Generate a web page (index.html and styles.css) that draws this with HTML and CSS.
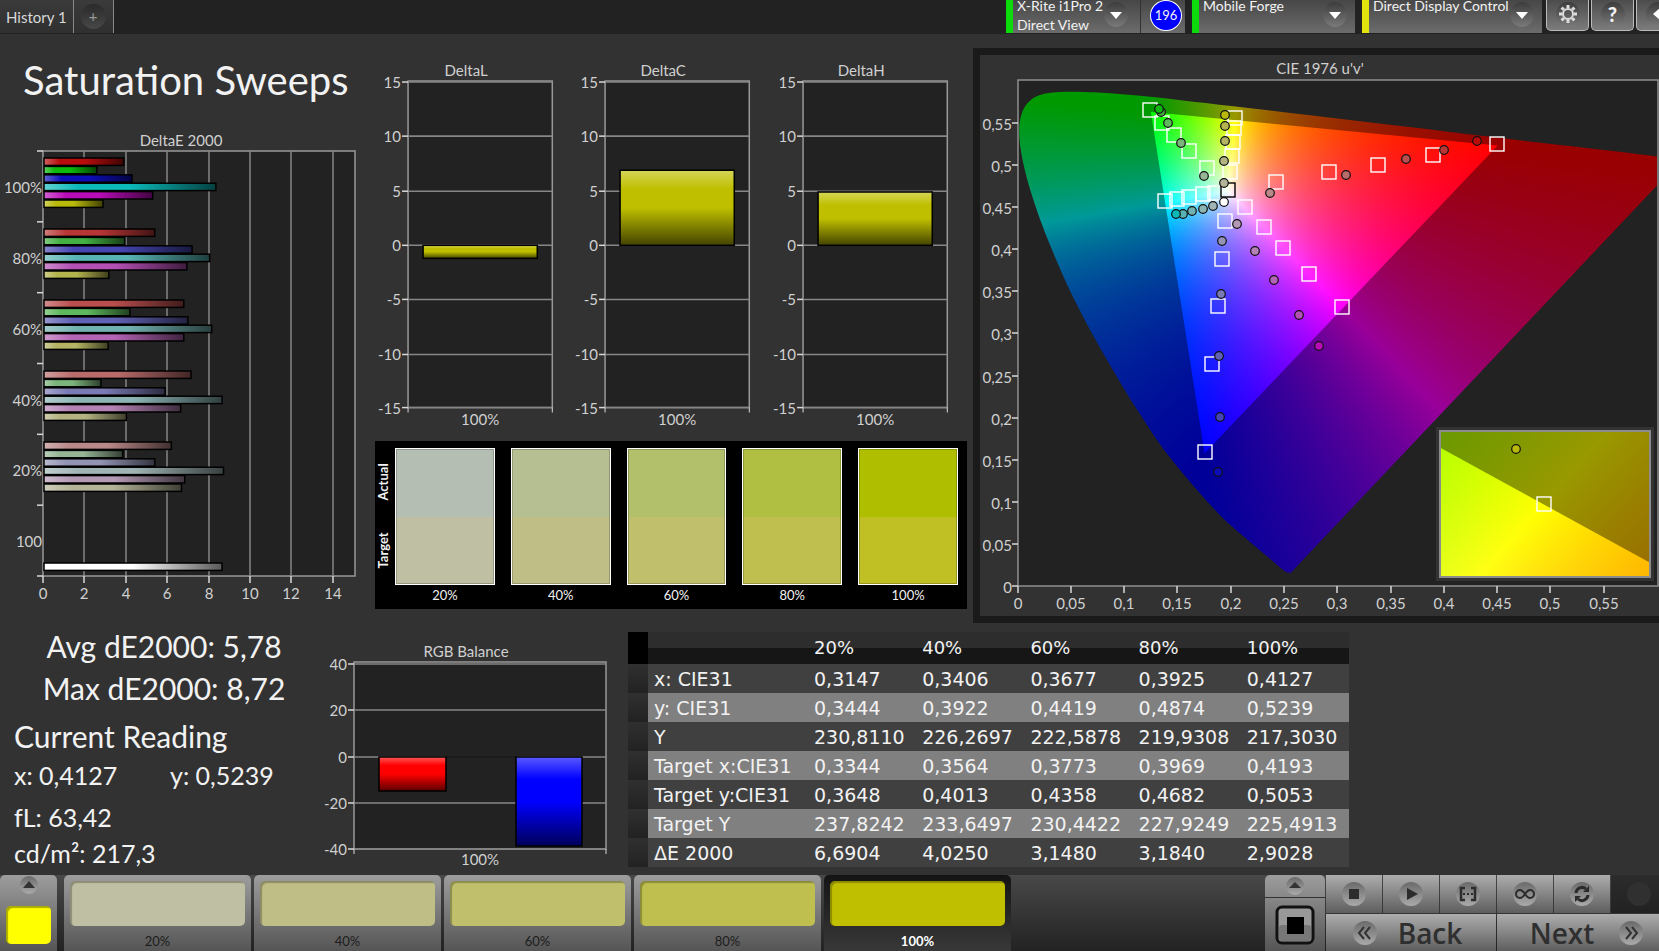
FILE: index.html
```html
<!DOCTYPE html>
<html lang="en">
<head>
<meta charset="utf-8">
<title>Saturation Sweeps</title>
<link rel="stylesheet" href="styles.css">
</head>
<body>
<header class="topbar">
  <nav class="tabs">
    <button class="tab" type="button">History 1</button>
    <button class="tab tab-add" type="button" aria-label="Add history"><span class="tab-plus">+</span></button>
  </nav>
  <div class="devices">
    <div class="device device-meter">
      <button class="device-pick" type="button"><span class="device-name">X-Rite i1Pro 2<br>Direct View</span><span class="knob"><svg viewBox="0 0 24 24"><path d="M6 10h12l-6 7z" fill="#fff"/></svg></span></button>
      <span class="device-count"><span class="count-badge">196</span></span>
    </div>
    <div class="device device-source">
      <button class="device-pick" type="button"><span class="device-name">Mobile Forge</span><span class="knob"><svg viewBox="0 0 24 24"><path d="M6 10h12l-6 7z" fill="#fff"/></svg></span></button>
    </div>
    <div class="device device-display">
      <button class="device-pick" type="button"><span class="device-name">Direct Display Control</span><span class="knob"><svg viewBox="0 0 24 24"><path d="M6 10h12l-6 7z" fill="#fff"/></svg></span></button>
    </div>
    <div class="tools">
      <button class="tool" type="button" aria-label="Settings"><span class="knob"><svg viewBox="0 0 24 24"><g fill="none" stroke="#ddd"><circle cx="12" cy="12" r="5" stroke-width="2"/><path stroke-width="3" d="M12 3v3M12 18v3M3 12h3M18 12h3M5.600 5.600l2.200 2.200M16.200 16.200l2.200 2.200M5.600 18.400l2.200-2.200M16.200 7.800l2.200-2.200"/></g></svg></span></button>
      <button class="tool tool-help" type="button" aria-label="Help"><span class="knob">?</span></button>
      <button class="tool" type="button" aria-label="Collapse"><span class="knob"><svg viewBox="0 0 24 24"><path d="M14 6v12l-7-6z" fill="#fff"/></svg></span></button>
    </div>
  </div>
</header>

<main>
  <section class="upper">
    <div class="sweep">
      <h1>Saturation Sweeps</h1>
      <svg class="chart" id="delta-e" viewBox="0 130 375 480" role="img" aria-label="DeltaE 2000"></svg>
    </div>
    <div class="middle">
      <div class="deltas">
        <svg class="chart" id="delta-l" viewBox="0 60 197 370" role="img" aria-label="DeltaL"></svg>
        <svg class="chart" id="delta-c" viewBox="0 60 197 370" role="img" aria-label="DeltaC"></svg>
        <svg class="chart" id="delta-h" viewBox="0 60 197 370" role="img" aria-label="DeltaH"></svg>
      </div>
      <div class="compare">
        <div class="compare-side"><span>Actual</span><span>Target</span></div>
        <figure><div class="pair pair-20"></div><figcaption>20%</figcaption></figure>
        <figure><div class="pair pair-40"></div><figcaption>40%</figcaption></figure>
        <figure><div class="pair pair-60"></div><figcaption>60%</figcaption></figure>
        <figure><div class="pair pair-80"></div><figcaption>80%</figcaption></figure>
        <figure><div class="pair pair-100"></div><figcaption>100%</figcaption></figure>
      </div>
    </div>
    <div class="cie">
      <svg class="chart" id="cie-axes" viewBox="980 55 679 561" role="img" aria-label="CIE 1976 u'v'"></svg>
      <canvas id="cie-fill" width="679" height="561"></canvas>
      <svg class="chart" id="cie-marks" viewBox="980 55 679 561" aria-hidden="true"></svg>
    </div>
  </section>

  <section class="lower">
    <div class="stats">
      <p class="stat-head">Avg dE2000: 5,78</p>
      <p class="stat-head">Max dE2000: 8,72</p>
      <h2>Current Reading</h2>
      <p class="stat-xy"><span>x: 0,4127</span><span>y: 0,5239</span></p>
      <p class="stat">fL: 63,42</p>
      <p class="stat">cd/m²: 217,3</p>
    </div>
    <svg class="chart" id="rgb" viewBox="314 625 314 246" role="img" aria-label="RGB Balance"></svg>
    <table>
      <thead>
        <tr><th class="grip"></th><th class="name"></th><th>20%</th><th>40%</th><th>60%</th><th>80%</th><th>100%</th></tr>
      </thead>
      <tbody>
        <tr><td class="grip"></td><td>x: CIE31</td><td>0,3147</td><td>0,3406</td><td>0,3677</td><td>0,3925</td><td>0,4127</td></tr>
        <tr><td class="grip"></td><td>y: CIE31</td><td>0,3444</td><td>0,3922</td><td>0,4419</td><td>0,4874</td><td>0,5239</td></tr>
        <tr><td class="grip"></td><td>Y</td><td>230,8110</td><td>226,2697</td><td>222,5878</td><td>219,9308</td><td>217,3030</td></tr>
        <tr><td class="grip"></td><td>Target x:CIE31</td><td>0,3344</td><td>0,3564</td><td>0,3773</td><td>0,3969</td><td>0,4193</td></tr>
        <tr><td class="grip"></td><td>Target y:CIE31</td><td>0,3648</td><td>0,4013</td><td>0,4358</td><td>0,4682</td><td>0,5053</td></tr>
        <tr><td class="grip"></td><td>Target Y</td><td>237,8242</td><td>233,6497</td><td>230,4422</td><td>227,9249</td><td>225,4913</td></tr>
        <tr><td class="grip"></td><td>ΔE 2000</td><td>6,6904</td><td>4,0250</td><td>3,1480</td><td>3,1840</td><td>2,9028</td></tr>
      </tbody>
    </table>
  </section>
</main>

<footer class="dock">
  <button class="current" type="button" aria-label="Current patch"><svg class="up" viewBox="0 0 20 20"><circle cx="10" cy="10" r="9" fill="url(#knobFill)"/><path d="M4 13h12l-6-7z" fill="#333"/></svg><span class="current-patch"></span></button>
  <div class="tiles">
    <button class="tile" type="button"><span class="patch patch-20"></span>20%</button>
    <button class="tile" type="button"><span class="patch patch-40"></span>40%</button>
    <button class="tile" type="button"><span class="patch patch-60"></span>60%</button>
    <button class="tile" type="button"><span class="patch patch-80"></span>80%</button>
    <button class="tile tile-active" type="button"><span class="patch patch-100"></span>100%</button>
  </div>
  <div class="player">
    <div class="mode">
      <button class="mode-up" type="button" aria-label="Expand"><svg class="up" viewBox="0 0 20 20"><circle cx="10" cy="10" r="9" fill="url(#knobFill)"/><path d="M4 12h12l-6-6z" fill="#333"/></svg></button>
      <button class="mode-stop" type="button" aria-label="Window pattern"><svg viewBox="0 0 40 40"><rect x="2" y="2" width="36" height="36" rx="5" fill="#999" stroke="#111" stroke-width="3"/><rect x="4" y="20" width="32" height="16" rx="3" fill="#777"/><rect x="12" y="12" width="17" height="17" fill="#000"/></svg></button>
    </div>
    <div class="keys">
      <button class="key" type="button" aria-label="Stop"><svg viewBox="0 0 26 26"><circle cx="13" cy="13" r="12" fill="url(#knobFill)"/><path d="M8 8h10v10H8z" fill="#2c2c2c"/></svg></button>
      <button class="key" type="button" aria-label="Play"><svg viewBox="0 0 26 26"><circle cx="13" cy="13" r="12" fill="url(#knobFill)"/><path d="M9 7l11 6-11 6z" fill="#2c2c2c"/></svg></button>
      <button class="key" type="button" aria-label="Range"><svg viewBox="0 0 26 26"><circle cx="13" cy="13" r="12" fill="url(#knobFill)"/><path d="M10 7H6v12h4M16 7h4v12h-4" fill="none" stroke="#2c2c2c" stroke-width="2.500"/><path d="M8 12h2v2H8zM12 12h2v2h-2zM16 12h2v2h-2z" fill="#2c2c2c"/></svg></button>
      <button class="key" type="button" aria-label="Loop"><svg viewBox="0 0 26 26"><circle cx="13" cy="13" r="12" fill="url(#knobFill)"/><path d="M13 13c-2-3-3-4-5-4a4 4 0 0 0 0 8c2 0 3-1 5-4s3-4 5-4a4 4 0 0 1 0 8c-2 0-3-1-5-4z" fill="none" stroke="#2c2c2c" stroke-width="2"/></svg></button>
      <button class="key" type="button" aria-label="Repeat"><svg viewBox="0 0 26 26"><circle cx="13" cy="13" r="12" fill="url(#knobFill)"/><path d="M7 12a6 6 0 0 1 10-4M19 14a6 6 0 0 1-10 4" fill="none" stroke="#2c2c2c" stroke-width="3"/><path d="M14 11h6V5zM12 15H6v6z" fill="#2c2c2c"/></svg></button>
      <button class="key key-off" type="button" aria-label="Record"><svg viewBox="0 0 26 26"><circle cx="13" cy="13" r="12" fill="#303030"/></svg></button>
      <button class="key key-wide key-back" type="button"><svg viewBox="0 0 26 26"><circle cx="13" cy="13" r="12" fill="url(#knobFill)"/><path d="M12 7l-5 6 5 6M18 7l-5 6 5 6" fill="none" stroke="#333" stroke-width="2"/></svg>Back</button>
      <button class="key key-wide key-next" type="button">Next<svg viewBox="0 0 26 26"><circle cx="13" cy="13" r="12" fill="url(#knobFill)"/><path d="M8 7l5 6-5 6M14 7l5 6-5 6" fill="none" stroke="#333" stroke-width="2"/></svg></button>
    </div>
  </div>
</footer>

<svg class="defs" aria-hidden="true">
  <defs>
    <linearGradient id="knobFill" x1="0" y1="0" x2="0" y2="1"><stop offset="0" stop-color="#6a6a6a"/><stop offset="1" stop-color="#aaa"/></linearGradient>
    <linearGradient id="shadeX"><stop offset="0" stop-color="#fff" stop-opacity=".35"/><stop offset=".2" stop-color="#fff" stop-opacity="0"/><stop offset=".5" stop-opacity="0"/><stop offset="1" stop-opacity=".65"/></linearGradient>
    <linearGradient id="shadeY" x1="0" y1="0" x2="0" y2="1"><stop offset="0" stop-color="#fff" stop-opacity=".35"/><stop offset=".25" stop-color="#fff" stop-opacity="0"/><stop offset=".5" stop-opacity="0"/><stop offset="1" stop-opacity=".65"/></linearGradient>
  </defs>
</svg>
<script src="charts.js"></script>
</body>
</html>
```
FILE: styles.css
```css
* { box-sizing: border-box; }
body {
  margin: 0;
  min-height: 100vh;
  display: flex;
  flex-direction: column;
  background: #323232;
  color: #f2f2f2;
  font-family: Lato, "Liberation Sans", sans-serif;
  overflow-x: hidden;
}
button { font: inherit; color: inherit; border: 0; padding: 0; background: none; }
h1, h2, p, figure { margin: 0; font-weight: 400; }
.defs { position: absolute; width: 0; height: 0; }

/* top bar */
.topbar {
  display: flex;
  justify-content: space-between;
  height: 34px;
  background: #222;
  overflow: hidden;
}
.tabs { display: flex; height: 33px; }
.tab {
  padding: 0 6px;
  font-size: 15px;
  color: #d8d8d8;
  background: linear-gradient(#3a3a3a, #303030);
  border-right: 1px solid #888;
}
.tab-add { width: 40px; padding: 0 7px; }
.tab-plus {
  display: block;
  height: 25px;
  line-height: 25px;
  border-radius: 50%;
  color: #999;
  background: linear-gradient(#2a2a2a, #484848);
}
.devices { display: flex; gap: 7px; margin-right: -20px; }
.device {
  display: flex;
  height: 33px;
  background: linear-gradient(#474747, #6c6c6c);
  border-left: 7px solid #0cdc0c;
}
.device-display { border-left-color: #e2e20c; }
.device-meter { width: 179px; }
.device-source { width: 163px; }
.device-display { width: 180px; }
.device-pick {
  flex: 1;
  display: flex;
  justify-content: space-between;
  align-items: flex-start;
  padding: 0 8px 0 4px;
  text-align: left;
}
.device-meter .device-pick { padding-right: 12px; }
.device-name {
  margin-top: -4px;
  font-size: 14px;
  line-height: 19px;
  white-space: nowrap;
}
.knob {
  flex: none;
  width: 24px;
  height: 25px;
  margin-top: 2px;
  border-radius: 50%;
  background: linear-gradient(#3c3c3c, #7a7a7a);
}
.knob svg { display: block; width: 24px; height: 24px; }
.device-count {
  width: 45px;
  display: grid;
  place-items: center;
  padding: 0 0 3px 6px;
  border-left: 1px solid #333;
}
.count-badge {
  width: 32px;
  height: 31px;
  line-height: 29px;
  border: 1px solid #fff;
  border-radius: 50%;
  background: #00f;
  text-align: center;
  font-size: 13px;
}
.tools { display: flex; gap: 2px; margin-left: -3px; }
.tool {
  display: flex;
  justify-content: center;
  width: 43px;
  height: 31px;
  border: 1px solid #bbb;
  border-top: 0;
  border-radius: 0 0 5px 5px;
  background: linear-gradient(#4c4c4c, #7c7c7c);
}
.tool-help { font-size: 20px; font-weight: 900; }
.tool-help .knob { line-height: 24px; }

/* upper half */
.chart { display: block; width: 100%; height: auto; }
.chart text { font-size: 15px; fill: #d0d0d0; }
.upper { display: grid; grid-template-columns: 375fr 592fr 692fr; align-items: start; }
h1 { padding: 18px 0 0 23px; font-size: 40px; line-height: 56px; height: 96px; white-space: nowrap; }
.middle { display: grid; gap: 10px; padding-top: 26px; }
.deltas { display: grid; grid-template-columns: repeat(3, 1fr); }
.compare {
  display: grid;
  grid-template-columns: 4px repeat(5, 1fr);
  column-gap: 16px;
  padding: 7px 9px 4px 0;
  background: #000;
}
.compare-side {
  display: grid;
  grid-template-rows: 1fr 1fr;
  height: 137px;
  width: 16px;
  font-size: 13px;
  font-weight: 700;
  line-height: 16px;
}
.compare-side span { writing-mode: vertical-rl; transform: rotate(180deg); text-align: center; }
.pair { height: 137px; border: 1px solid #fff; outline: 1px solid #0003; outline-offset: -2px; }
.pair-20 { background: linear-gradient(#b4beb2 50%, #bfbfa3 50%); }
.pair-40 { background: linear-gradient(#b5bf91 50%, #bfbe87 50%); }
.pair-60 { background: linear-gradient(#b2bf6b 50%, #bfbf6c 50%); }
.pair-80 { background: linear-gradient(#b0be41 50%, #bebf4e 50%); }
.pair-100 { background: linear-gradient(#b0be00 50%, #c0bf24 50%); }
figcaption { font-size: 13px; line-height: 20px; text-align: center; }
.cie {
  display: grid;
  margin: 14px 0 0 6px;
  border: 7px solid #1a1a1a;
  border-right: 0;
}
.cie > * { grid-area: 1 / 1; width: 100%; }

/* lower half */
.lower { display: grid; grid-template-columns: 314fr 314fr 721fr 310fr; align-items: start; padding-top: 2px; }
.stats { padding: 0 20px 0 14px; white-space: nowrap; }
.stat-head { padding-left: 20px; text-align: center; font-size: 30px; line-height: 42px; }
h2 { padding-top: 6px; font-size: 30px; line-height: 42px; }
.stat-xy { display: grid; grid-template-columns: 1fr 124px; padding-bottom: 3px; font-size: 25px; line-height: 36px; }
.stat { padding-top: 6px; font-size: 25px; line-height: 30px; }
table {
  width: 100%;
  margin-top: 7px;
  border-collapse: collapse;
  table-layout: fixed;
  font-family: "DejaVu Sans", sans-serif;
  font-size: 19px;
}
th, td { height: 29px; padding: 0 0 0 6px; text-align: left; font-weight: 400; line-height: 28px; white-space: nowrap; }
th { height: 32px; font-size: 18px; }
thead tr { background: linear-gradient(#2d2d2d 50%, #161616 50%); }
th.grip { width: 20px; background: #000; }
.name { width: 160px; }
tbody tr { background: #404040; }
tbody tr:nth-child(even) { background: #808080; }
td.grip { background: linear-gradient(#303030, #222); }

/* dock */
.dock {
  display: flex;
  margin-top: auto;
  height: 76px;
  background: linear-gradient(#484848, #222);
  overflow: hidden;
}
.current, .tile, .mode { background: linear-gradient(#9d9d9d, #555); border-radius: 5px 5px 0 0; }
.current {
  display: flex;
  flex-direction: column;
  align-items: center;
  gap: 11px;
  width: 57px;
}
.up { display: block; width: 20px; height: 20px; }
.current-patch { width: 45px; height: 38px; border-radius: 5px; background: #ff0; box-shadow: inset 2px 2px 1px #0005; }
.tiles { flex: 1; display: flex; gap: 3px; margin-left: 7px; }
.tile {
  flex: 0 1 187px;
  padding: 6px 6px 0;
  font-size: 13px;
  line-height: 30px;
  color: #1c1c1c;
}
.tile-active { background: linear-gradient(#141414, #383838); color: #fff; font-weight: 700; }
.patch { display: block; height: 45px; border-radius: 5px; box-shadow: inset 2px 2px 1px #0004; }
.patch-20 { background: #bfbfa3; }
.patch-40 { background: #bfbe87; }
.patch-60 { background: #bfbf6c; }
.patch-80 { background: #bebf4e; }
.patch-100 { background: #bfbf00; }
.player { display: flex; margin-right: -8px; }
.mode { width: 60px; display: grid; grid-template-rows: 23px 1fr; }
.mode-up { display: grid; place-items: center; border-bottom: 1px solid #333; }
.mode-stop { display: grid; place-items: center; }
.mode-stop svg { width: 40px; height: 40px; }
.keys {
  display: grid;
  grid-template-columns: repeat(6, 56px);
  grid-template-rows: 38px 37px;
  gap: 1px;
  margin-left: 1px;
}
.key { display: grid; place-items: center; background: linear-gradient(#adadad, #5e5e5e); }
.key svg { width: 26px; height: 26px; }
.key-off { background: linear-gradient(#2c2c2c, #222); }
.key-wide {
  grid-column: span 3;
  display: flex;
  align-items: center;
  justify-content: center;
  gap: 20px;
  color: #2f2f2f;
  font-family: "Open Sans", sans-serif;
  font-size: 28px;
  font-weight: 600;
  line-height: 36px;
}
.key-back { padding-right: 8px; }
.key-next { padding-left: 10px; gap: 24px; }
```
FILE: charts.js
```js
const NS = 'http://www.w3.org/2000/svg';
const GRID = '#868686', TICK = '#d8d8d8', PLOT = '#222';

function add(svg, tag, attrs, text) {
  const el = document.createElementNS(NS, tag);
  for (const key in attrs) el.setAttribute(key, attrs[key]);
  if (text !== undefined) el.textContent = text;
  svg.appendChild(el);
}
const byId = id => document.getElementById(id);
const label = (svg, x, y, text, anchor = 'middle') => add(svg, 'text', { x, y, 'text-anchor': anchor }, text);
const line = (svg, x1, y1, x2, y2, stroke, width = 1) => add(svg, 'line', { x1, y1, x2, y2, stroke, 'stroke-width': width });
const box = (svg, x, y, width, height, fill, stroke = 'none', sw = 1) =>
  add(svg, 'rect', { x, y, width, height, fill, stroke, 'stroke-width': sw });
function bar(svg, x, y, w, h, fill, shade) {
  box(svg, x, y, w, h, fill);
  box(svg, x, y, w, h, `url(#${shade})`, '#000', 1.5);
}

/* Fill per hue, from 100% down to 20% saturation */
const HUES = {
  red: ['#b90c0c', '#b93636', '#b94e4e', '#b96b6b', '#b98888'],
  green: ['#0cb90c', '#43b043', '#5eb85e', '#7cb57c', '#95b595'],
  blue: ['#0c0cb9', '#4545b4', '#6060b4', '#7a7ab4', '#9393b4'],
  cyan: ['#0cb9b9', '#58b4b4', '#72b1b1', '#8cb4b4', '#a0b4b4'],
  magenta: ['#b90cb9', '#b44fb4', '#b464b4', '#b482b4', '#b499b4'],
  yellow: ['#b9b90c', '#b4b44f', '#b4b464', '#b4b482', '#b4b499']
};

function drawDeltaE() {
  const svg = byId('delta-e');
  const left = 43, top = 151, right = 355, bottom = 576, unit = 20.7;
  const values = [
    [3.9, 2.6, 4.3, 8.35, 5.3, 2.9],
    [5.4, 3.95, 7.2, 8.05, 6.95, 3.18],
    [6.8, 4.2, 7, 8.15, 6.8, 3.15],
    [7.15, 2.8, 5.9, 8.65, 6.65, 4.03],
    [6.2, 3.85, 5.4, 8.72, 6.85, 6.69]
  ];
  label(svg, 181, 146, 'DeltaE 2000');
  box(svg, left, top, right - left, bottom - top, PLOT, '#999', 1.5);
  for (let v = 0; v <= 14; v += 2) {
    const x = Math.round(left + v * unit);
    if (v) line(svg, x, top, x, bottom, GRID, 1.5);
    line(svg, x, bottom, x, bottom + 7, TICK, 1.5);
    label(svg, x, 599, v);
  }
  const step = (bottom - top) / 6;
  for (let i = 0; i <= 6; i++) line(svg, 37, top + i * step, left, top + i * step, TICK, 1.5);
  ['100%', '80%', '60%', '40%', '20%', '100'].forEach((t, i) => label(svg, 42, 193 + i * step, t, 'end'));
  values.forEach((row, i) => Object.values(HUES).forEach((fills, j) =>
    bar(svg, left + 1, 158 + i * 71 + j * 8.4, row[j] * unit - 1, 7.4, fills[i], 'shadeX')));
  bar(svg, left + 1, 563, 178, 7.4, '#fff', 'shadeX');
}

function drawDelta(id, title, value) {
  const svg = byId(id);
  const left = 33, right = 177, zero = 245, unit = 10.86;
  label(svg, 91, 76, title);
  box(svg, left, 81, right - left, 326, PLOT, '#999', 1.5);
  for (let v = 15; v >= -15; v -= 5) {
    const y = Math.round(zero - v * unit) + (v === -15 ? -1 : 0);
    line(svg, left, y, right, y, GRID, 1.5);
    line(svg, 27, y, left, y, TICK, 1.5);
    label(svg, 26, y + 6, v, 'end');
  }
  line(svg, left, 407, left, 412, TICK, 1);
  line(svg, right, 407, right, 412, TICK, 1);
  bar(svg, 48, value > 0 ? zero - value * unit : zero, 114, Math.abs(value) * unit, '#bfbf00', 'shadeY');
  label(svg, 105, 424, '100%');
}

function drawBalance() {
  const svg = byId('rgb');
  const left = 354, right = 606;
  label(svg, 466, 657, 'RGB Balance');
  box(svg, left, 662, right - left, 187, PLOT, '#999', 1.5);
  [[40, 664], [20, 710], [0, 757], [-20, 803], [-40, 849]].forEach(([v, y]) => {
    line(svg, left, y, right, y, GRID, 1.5);
    line(svg, 348, y, left, y, TICK, 1.5);
    label(svg, 347, y + 6, v, 'end');
  });
  line(svg, left, 849, left, 854, TICK, 1);
  line(svg, right, 849, right, 854, TICK, 1);
  bar(svg, 379, 757, 67, 34, '#f00', 'shadeY');
  line(svg, 446, 757, 516, 757, '#000', 1.5);
  bar(svg, 516, 757, 66, 89, '#00f', 'shadeY');
  label(svg, 480, 865, '100%');
}

/* CIE 1931 spectral locus, x then y */
const LOCUS = [.1741, .005, .1733, .0048, .1714, .0051, .1689, .0069, .1644, .0109, .1566, .0177, .144, .0297,
  .1241, .0578, .1096, .0868, .0913, .1327, .0687, .2007, .0454, .295, .0235, .4127, .0082, .5384, .0039, .6548,
  .0139, .7502, .0389, .812, .0743, .8338, .1142, .8262, .1547, .8059, .2296, .7543, .3016, .6923, .3731, .6245,
  .4441, .5547, .5125, .4866, .5752, .4242, .627, .3725, .6658, .334, .6915, .3083, .719, .2809, .7347, .2653];
const PRIMARIES = [.64, .33, .3, .6, .15, .06];

const toPlot = (x, y) => {
  const d = -2 * x + 12 * y + 3;
  return [37.700 + 4 * x / d * 1065.2, 531.300 - 9 * y / d * 843];
};
const fromPlot = (px, py) => {
  const u = (px - 37.700) / 1065.2, v = (531.300 - py) / 843;
  const d = 6 * u - 16 * v + 12;
  return [9 * u / d, 4 * v / d];
};

function spectrum(width, height, toXY, level) {
  const layer = document.createElement('canvas');
  layer.width = width;
  layer.height = height;
  const ctx = layer.getContext('2d');
  const image = ctx.createImageData(width, height);
  for (let py = 0, i = 0; py < height; py++) {
    for (let px = 0; px < width; px++, i += 4) {
      const [x, y] = toXY(px + .5, py + .5);
      const X = x / y, Z = (1 - x - y) / y;
      const rgb = [3.2406 * X - 1.5372 - .4986 * Z, -.9689 * X + 1.8758 + .0415 * Z, .0557 * X - .204 + 1.057 * Z]
        .map(c => Math.max(0, y > 0 ? c : 0));
      const peak = Math.max(...rgb) || 1;
      rgb.forEach((c, k) => { image.data[i + k] = 255 * level * c / peak; });
      image.data[i + 3] = 255;
    }
  }
  ctx.putImageData(image, 0, 0);
  return layer;
}

function trace(ctx, points, smooth) {
  ctx.beginPath();
  ctx.moveTo(...points[0]);
  for (let i = 1; i < points.length; i++) {
    if (!smooth) { ctx.lineTo(...points[i]); continue; }
    const a = points[i - 2] || points[i - 1], b = points[i - 1], c = points[i], d = points[i + 1] || c;
    ctx.bezierCurveTo(b[0] + (c[0] - a[0]) / 6, b[1] + (c[1] - a[1]) / 6,
      c[0] - (d[0] - b[0]) / 6, c[1] - (d[1] - b[1]) / 6, c[0], c[1]);
  }
  ctx.closePath();
}
const pairs = (list, project) => {
  const out = [];
  for (let i = 0; i < list.length; i += 2) out.push(project(list[i], list[i + 1]));
  return out;
};

function drawGamut() {
  const ctx = byId('cie-fill').getContext('2d');
  const draw = (w, h, dx, dy, toXY, project) => {
    ctx.save();
    ctx.translate(dx, dy);
    ctx.beginPath();
    ctx.rect(0, 0, w, h);
    ctx.clip();
    trace(ctx, pairs(LOCUS, project), true);
    ctx.clip();
    ctx.drawImage(spectrum(w, h, toXY, .6), 0, 0);
    trace(ctx, pairs(PRIMARIES, project), false);
    ctx.clip();
    ctx.drawImage(spectrum(w, h, toXY, 1), 0, 0);
    ctx.restore();
  };
  draw(677, 531, 0, 0, fromPlot, toPlot);
  /* magnified view around the selected target */
  ctx.fillStyle = '#333';
  ctx.fillRect(456, 372, 218, 154);
  const cx = 104, cy = 74, sx = 4258, sy = 2941;
  draw(212, 148, 459, 375,
    (px, py) => [.4193 + (px - cx) / sx, .5053 - (py - cy) / sy],
    (x, y) => [cx + (x - .4193) * sx, cy - (y - .5053) * sy]);
  ctx.strokeStyle = '#8c8c8c';
  ctx.lineWidth = 2;
  ctx.strokeRect(460, 376, 210, 146);
}

function drawCieAxes() {
  const svg = byId('cie-axes');
  label(svg, 1320, 74, "CIE 1976 u'v'");
  box(svg, 1018, 80, 640, 506, PLOT, '#909090', 1.5);
  for (let i = 0; i < 12; i++) {
    const text = String(i * 5 / 100).replace('.', ',');
    const x = Math.round(1017.700 + i * 53.260), y = Math.round(586.300 - i * 42.150);
    line(svg, x, 586, x, 593, TICK, 1.5);
    line(svg, 1012, y, 1018, y, TICK, 1.5);
    label(svg, x, 609, text);
    label(svg, 1012, y + 7, text, 'end');
  }
}

const TARGETS = [[1150, 110], [1162, 123], [1174, 135], [1189, 151], [1207, 168],
  [1235, 118], [1234, 128], [1233, 142], [1232, 156], [1230, 172],
  [1165, 201], [1177, 199], [1189, 197], [1203, 194], [1215, 193],
  [1205, 452], [1212, 364], [1218, 306], [1222, 259], [1225, 221],
  [1342, 307], [1309, 274], [1283, 248], [1264, 227], [1245, 207],
  [1497, 144], [1433, 155], [1378, 165], [1329, 172], [1276, 182], [1544, 504]];
const READINGS = {
  green: [[1159, 109], [1161, 112], [1168, 123], [1181, 143], [1204, 176]],
  yellow: [[1225, 115], [1225, 126], [1225, 141], [1224, 161], [1224, 183]],
  cyan: [[1176, 214], [1183, 214], [1192, 211], [1203, 209], [1213, 206]],
  blue: [[1218, 472], [1220, 417], [1219, 356], [1221, 294], [1222, 241]],
  magenta: [[1319, 346], [1299, 315], [1274, 280], [1255, 251], [1237, 224]],
  red: [[1477, 141], [1444, 150], [1406, 159], [1346, 175], [1270, 193]]
};

function drawCieMarks() {
  const svg = byId('cie-marks');
  const dot = (cx, cy, fill) => add(svg, 'circle', { cx, cy, r: 4.3, fill, stroke: '#111', 'stroke-width': 1.2 });
  TARGETS.forEach(([x, y]) => box(svg, x - 7, y - 7, 14, 14, 'none', '#fff', 1.4));
  box(svg, 1221, 183, 14, 14, 'none', '#000', 1.4);
  for (const hue in READINGS) {
    READINGS[hue].map((p, i) => [...p, HUES[hue][i]]).reverse().forEach(p => dot(...p));
  }
  dot(1224, 202, '#fff');
  dot(1516, 449, '#b9b90c');
}

drawDeltaE();
drawDelta('delta-l', 'DeltaL', -1.2);
drawDelta('delta-c', 'DeltaC', 6.9);
drawDelta('delta-h', 'DeltaH', 4.9);
drawBalance();
drawGamut();
drawCieAxes();
drawCieMarks();
```
